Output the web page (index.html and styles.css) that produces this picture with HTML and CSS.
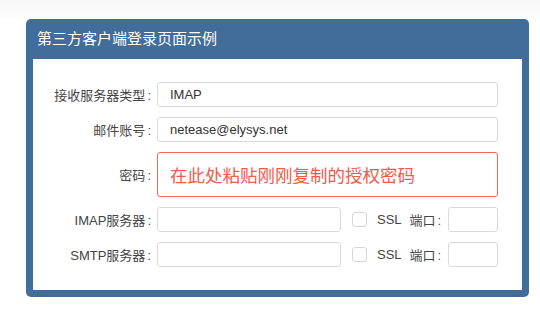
FILE: index.html
```html
<!DOCTYPE html>
<html lang="zh-CN">
<head>
  <meta charset="UTF-8">
  <meta name="viewport" content="width=device-width, initial-scale=1.0">
  <title>第三方客户端登录页面示例</title>
  <link rel="stylesheet" href="styles.css">
</head>
<body>
  <div class="panel">
    <div class="panel-title">第三方客户端登录页面示例</div>
    <div class="panel-body">
      <div class="form-row">
        <label class="form-label">接收服务器类型<span class="colon">:</span></label>
        <input type="text" class="field field-wide" value="IMAP">
      </div>
      <div class="form-row">
        <label class="form-label">邮件账号<span class="colon">:</span></label>
        <input type="text" class="field field-wide" value="netease@elysys.net">
      </div>
      <div class="form-row">
        <label class="form-label">密码<span class="colon">:</span></label>
        <div class="field field-wide password-box">在此处粘贴刚刚复制的授权密码</div>
      </div>
      <div class="form-row">
        <label class="form-label">IMAP服务器<span class="colon">:</span></label>
        <input type="text" class="field field-host">
        <span class="check"></span>
        <span class="ssl">SSL</span>
        <span class="port-label">端口<span class="colon">:</span></span>
        <input type="text" class="field field-port">
      </div>
      <div class="form-row">
        <label class="form-label">SMTP服务器<span class="colon">:</span></label>
        <input type="text" class="field field-host">
        <span class="check"></span>
        <span class="ssl">SSL</span>
        <span class="port-label">端口<span class="colon">:</span></span>
        <input type="text" class="field field-port">
      </div>
    </div>
  </div>
</body>
</html>
```

FILE: styles.css
```css
html {
  background: #fff;
}
body {
  margin: 0;
  padding: 19px 0 0 26px;
  font-family: "Liberation Sans", "Noto Sans CJK SC", sans-serif;
  background: linear-gradient(#f7f7f7 0, #fdfdfd 18px, #fff 19px) no-repeat;
  color: #333;
}
.panel {
  width: 503px;
  background-color: #426d9a;
  border-radius: 5px;
  padding: 0 7px 7px;
  box-sizing: border-box;
}
.panel-title {
  height: 40px;
  line-height: 40px;
  padding-left: 4px;
  color: #fff;
  font-size: 15px;
}
.panel-body {
  background: #fff;
  padding: 23px 0 23px;
}
.form-row {
  display: flex;
  align-items: center;
  margin-bottom: 10px;
}
.form-row:last-child {
  margin-bottom: 0;
}
.form-label {
  width: 118px;
  margin-right: 6px;
  text-align: right;
  font-size: 13px;
  color: #444;
}
.colon {
  margin-left: 2px;
}
.field {
  height: 25px;
  box-sizing: border-box;
  border: 1px solid #dadada;
  border-radius: 3px;
  padding: 0 12px;
  font-family: "Liberation Sans", "Noto Sans CJK SC", sans-serif;
  font-size: 13px;
  color: #333;
  outline: none;
}
.field-wide {
  width: 341px;
}
.password-box {
  height: 45px;
  display: flex;
  align-items: center;
  border-color: #f4675c;
  color: #f25a4e;
  font-size: 17.5px;
}
.field-host {
  width: 184px;
}
.check {
  width: 15px;
  height: 15px;
  box-sizing: border-box;
  border: 1px solid #d6d6d6;
  border-radius: 3px;
  margin-left: 11px;
}
.ssl {
  margin-left: 10px;
  font-size: 13px;
  color: #444;
}
.port-label {
  margin-left: 8px;
  font-size: 13px;
  color: #444;
}
.field-port {
  width: 50px;
  margin-left: 7px;
}
```
